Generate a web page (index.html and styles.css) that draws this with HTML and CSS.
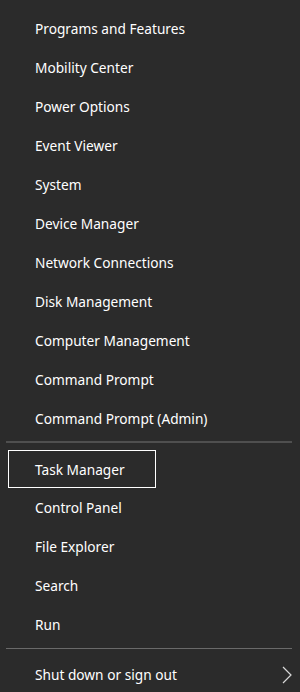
FILE: index.html
```html
<!DOCTYPE html>
<html>

<head>
	<title>Quick Link Menu</title>
	<link rel="stylesheet" href="styles.css">
</head>

<body>
	<nav class="menu">
		<ul class="group group-top">
			<li class="item">Programs and Features</li>
			<li class="item">Mobility Center</li>
			<li class="item">Power Options</li>
			<li class="item">Event Viewer</li>
			<li class="item">System</li>
			<li class="item">Device Manager</li>
			<li class="item">Network Connections</li>
			<li class="item">Disk Management</li>
			<li class="item">Computer Management</li>
			<li class="item">Command Prompt</li>
			<li class="item">Command Prompt (Admin)</li>
		</ul>
		<div class="divider divider-top"></div>
		<ul class="group">
			<li class="item focused">Task Manager</li>
			<li class="item">Control Panel</li>
			<li class="item">File Explorer</li>
			<li class="item">Search</li>
			<li class="item">Run</li>
		</ul>
		<div class="divider divider-bottom"></div>
		<ul class="group">
			<li class="item submenu">
				<span>Shut down or sign out</span>
				<svg class="chevron" width="10" height="18" viewBox="0 0 10 18">
					<polyline points="1,1 9,9 1,17" />
				</svg>
			</li>
		</ul>
	</nav>
</body>

</html>
```

FILE: styles.css
```css
body,
* {
	margin: 0;
	padding: 0;
	box-sizing: border-box;
}

body {
	background: #2b2b2b;
	font-family: "Noto Sans", "Open Sans", sans-serif;
	color: #ffffff;
}

.menu {
	width: 300px;
	height: 692px;
	padding-top: 9px;
	overflow: hidden;
}

.group {
	list-style: none;
}

.item {
	display: flex;
	align-items: center;
	height: 39px;
	padding-left: 35px;
	font-size: 13.7px;
	white-space: nowrap;
}

.item.focused {
	width: 148px;
	height: 38px;
	margin: 1px 0 0 8px;
	padding-left: 26px;
	border: 1px solid #ffffff;
}

.divider {
	margin-left: 6px;
	margin-right: 8px;
}

.divider-top {
	height: 2px;
	margin-top: 3px;
	margin-bottom: 7px;
	background: #4f4f4f;
}

.divider-bottom {
	height: 1px;
	margin-top: 4px;
	margin-bottom: 6px;
	background: #6a6a6a;
}

.item.submenu {
	justify-content: space-between;
	padding-right: 8px;
}

.chevron polyline {
	fill: none;
	stroke: #d8d8d8;
	stroke-width: 1.2;
}
```
